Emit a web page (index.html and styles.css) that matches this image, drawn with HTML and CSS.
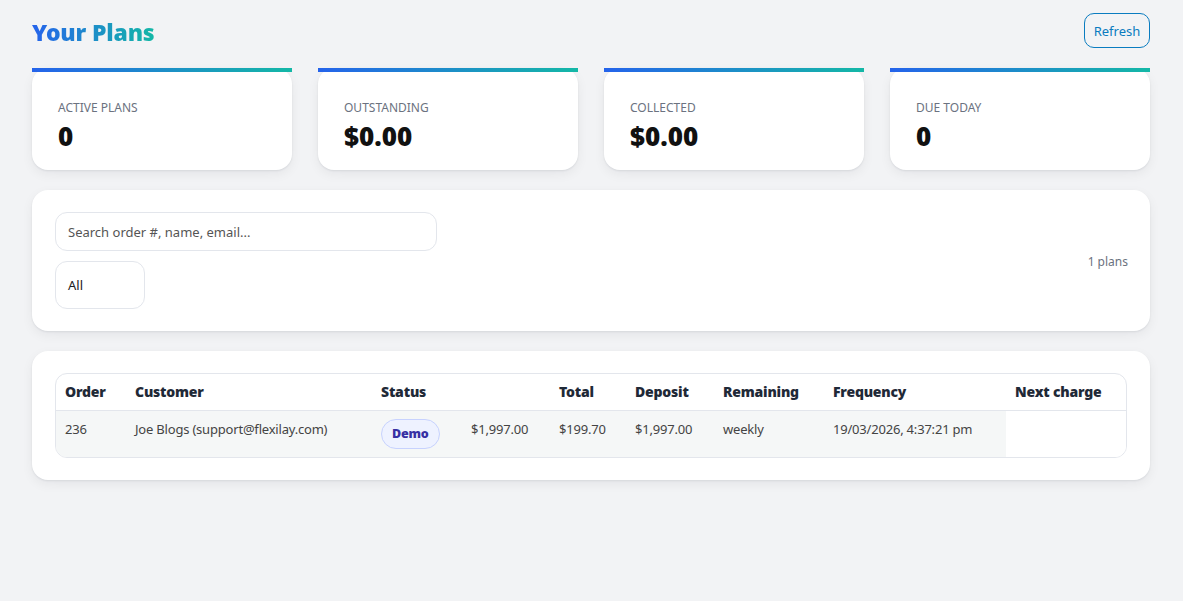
FILE: index.html
```html
<!DOCTYPE html>
<html lang="en">
<head>
    <meta charset="UTF-8">
    <meta name="viewport" content="width=device-width, initial-scale=1.0">
    <title>Your Plans</title>
    <link rel="stylesheet" href="styles.css">
</head>
<body>
    <div class="page">
        <header class="top">
            <h1 class="title">Your Plans</h1>
            <button class="refresh">Refresh</button>
        </header>

        <div class="stats">
            <div class="stat">
                <div class="stat-label">Active plans</div>
                <div class="stat-value">0</div>
            </div>
            <div class="stat">
                <div class="stat-label">Outstanding</div>
                <div class="stat-value">$0.00</div>
            </div>
            <div class="stat">
                <div class="stat-label">Collected</div>
                <div class="stat-value">$0.00</div>
            </div>
            <div class="stat">
                <div class="stat-label">Due today</div>
                <div class="stat-value">0</div>
            </div>
        </div>

        <div class="panel filters">
            <div class="filter-fields">
                <input class="search" type="text" placeholder="Search order #, name, email...">
                <div class="select">All</div>
            </div>
            <div class="count">1 plans</div>
        </div>

        <div class="panel">
            <div class="table-wrap">
                <table class="plans">
                    <colgroup>
                        <col style="width: 70px">
                        <col style="width: 246px">
                        <col style="width: 90px">
                        <col style="width: 88px">
                        <col style="width: 76px">
                        <col style="width: 88px">
                        <col style="width: 110px">
                        <col style="width: 182px">
                        <col>
                    </colgroup>
                    <thead>
                        <tr>
                            <th>Order</th>
                            <th>Customer</th>
                            <th>Status</th>
                            <th></th>
                            <th>Total</th>
                            <th>Deposit</th>
                            <th>Remaining</th>
                            <th>Frequency</th>
                            <th>Next charge</th>
                        </tr>
                    </thead>
                    <tbody>
                        <tr>
                            <td>236</td>
                            <td>Joe Blogs (support@flexilay.com)</td>
                            <td><span class="badge">Demo</span></td>
                            <td>$1,997.00</td>
                            <td>$199.70</td>
                            <td>$1,997.00</td>
                            <td>weekly</td>
                            <td>19/03/2026, 4:37:21 pm</td>
                            <td class="blank"></td>
                        </tr>
                    </tbody>
                </table>
            </div>
        </div>
    </div>
</body>
</html>
```

FILE: styles.css
```css
* {
    margin: 0;
    padding: 0;
    box-sizing: border-box;
}

body {
    font-family: "Noto Sans", "Open Sans", Arial, sans-serif;
    background-color: #f2f3f5;
    color: #374151;
}

.page {
    padding: 13px 33px 40px 32px;
}

/* header */
.top {
    display: flex;
    justify-content: space-between;
    align-items: center;
    height: 35px;
}

.title {
    font-size: 23px;
    font-weight: 900;
    letter-spacing: -0.2px;
    background: linear-gradient(90deg, #2563eb, #14b8a6);
    -webkit-background-clip: text;
    background-clip: text;
    color: transparent;
    margin-top: 2px;
}

.refresh {
    font-family: inherit;
    font-size: 13px;
    color: #0a7cc0;
    background: transparent;
    border: 1px solid #0a7cc0;
    border-radius: 10px;
    width: 66px;
    height: 35px;
    cursor: pointer;
}

/* stat cards */
.stats {
    display: grid;
    grid-template-columns: repeat(4, 1fr);
    gap: 26px;
    margin-top: 20px;
}

.stat {
    background: #fff;
    border-top: 4px solid;
    border-image: linear-gradient(90deg, #2563eb, #14b8a6) 1;
    border-radius: 16px;
    height: 102px;
    padding: 28px 26px 0;
    box-shadow: 0 4px 12px rgba(15, 23, 42, 0.06), 0 1px 2px rgba(15, 23, 42, 0.08);
}

.stat-label {
    font-size: 12px;
    text-transform: uppercase;
    color: #6b7280;
    line-height: 16px;
}

.stat-value {
    font-size: 26px;
    font-weight: 900;
    color: #111;
    line-height: 34px;
    margin-top: 3px;
}

/* panels */
.panel {
    background: #fff;
    border-radius: 16px;
    padding: 22px 23px;
    margin-top: 20px;
    box-shadow: 0 4px 12px rgba(15, 23, 42, 0.06), 0 1px 2px rgba(15, 23, 42, 0.08);
}

.filters {
    display: flex;
    justify-content: space-between;
    align-items: center;
}

.filter-fields {
    display: flex;
    flex-direction: column;
    gap: 10px;
}

.search {
    font-family: inherit;
    font-size: 13px;
    width: 382px;
    height: 39px;
    padding: 0 12px;
    border: 1px solid #e3e6ec;
    border-radius: 12px;
    outline: none;
}

.search::placeholder {
    color: #555;
}

.select {
    width: 90px;
    height: 48px;
    padding: 0 12px;
    border: 1px solid #e3e6ec;
    border-radius: 12px;
    display: flex;
    align-items: center;
    font-size: 13px;
    color: #222;
}

.count {
    font-size: 12px;
    color: #6b7280;
    margin-top: 2px;
    margin-right: -1px;
}

/* table */
.table-wrap {
    border: 1px solid #e3e6ec;
    border-radius: 12px;
    overflow: hidden;
}

.plans {
    width: 100%;
    border-collapse: collapse;
    table-layout: fixed;
}

.plans th {
    text-align: left;
    font-size: 14px;
    font-weight: 900;
    letter-spacing: -0.2px;
    color: #1f2937;
    padding: 8px 9px;
    line-height: 20px;
    border-bottom: 1px solid #e3e6ec;
    white-space: nowrap;
}

.plans td {
    font-size: 13px;
    letter-spacing: -0.2px;
    color: #444;
    padding: 8px 9px;
    line-height: 20px;
    vertical-align: top;
    background: #f5f7f7;
    white-space: nowrap;
}

.plans td.blank {
    background: #fff;
}

.badge {
    display: inline-flex;
    align-items: center;
    height: 30px;
    padding: 0 10px;
    border-radius: 15px;
    background: #eef2ff;
    border: 1px solid #c7d2fe;
    color: #3730a3;
    font-size: 12.5px;
    font-weight: 900;
}
```
